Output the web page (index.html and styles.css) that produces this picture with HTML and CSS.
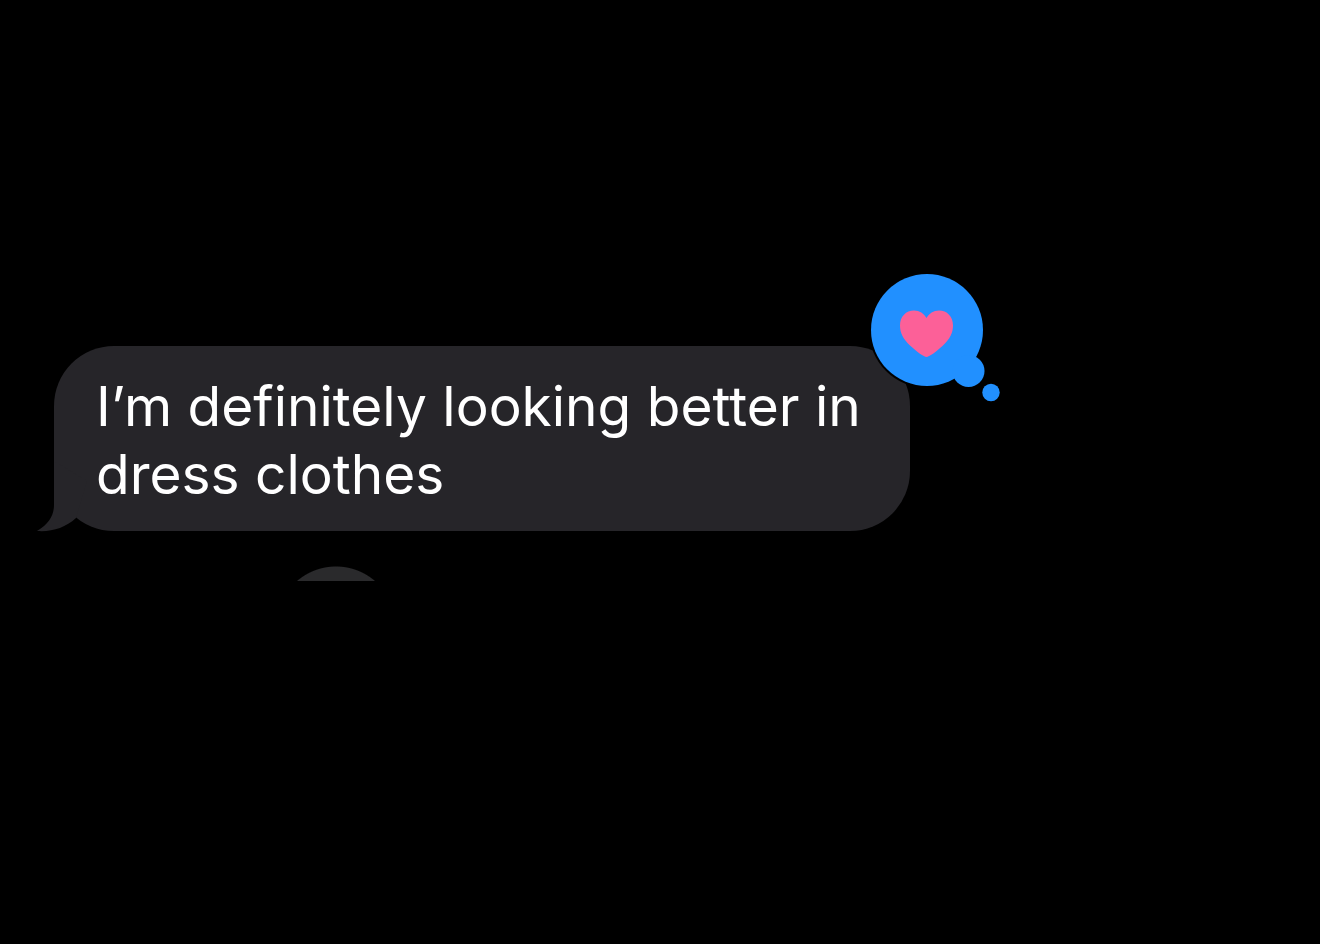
FILE: index.html
```html
<!DOCTYPE html>
<html lang="en">
<head>
  <meta charset="UTF-8" />
  <meta name="viewport" content="width=device-width, initial-scale=1.0" />
  <title>Messages</title>
  <link rel="stylesheet" href="styles.css">
</head>
<body>
  <main class="chat">
    <div class="bubble">
      <p class="text">I’m definitely looking better in dress clothes</p>

      <svg class="tail" width="60" height="70" viewBox="0 0 60 70" aria-hidden="true">
        <path d="M17 0V44C17 54 12 63 0 70C15 71 28 67 39 57L50 20Z" />
      </svg>

      <svg class="reaction" width="134" height="134" viewBox="0 0 134 134" role="img" aria-label="Loved">
        <circle class="ring" cx="59" cy="59" r="58" />
        <g class="cloud">
          <circle cx="59" cy="59" r="56" />
          <circle cx="100.500" cy="100" r="16" />
          <circle cx="123" cy="121.500" r="8.700" />
        </g>
        <path class="heart" d="M58.500 86C56 86 49 81 42 74.500C35 68 32 61.500 32 54.500C32 45.500 38 39.500 46 39.500C51.500 39.500 56 42.500 58.500 47C61 42.500 65.500 39.500 71 39.500C79 39.500 85 45.500 85 54.500C85 61.500 82 68 75 74.500C68 81 61 86 58.500 86Z" />
      </svg>
    </div>

    <div class="next"></div>
  </main>
</body>
</html>
```

FILE: styles.css
```css
body {
  margin: 0;
  background: #000;
  color: #fff;
  font-family: Inter, "Liberation Sans", sans-serif;
}
.chat {
  padding: 346px 54px 40px;
}
.bubble {
  position: relative;
  box-sizing: border-box;
  width: fit-content;
  max-width: 856px;
  padding: 26px 42px 23px;
  border-radius: 60px;
  background: #262529;
}
.text {
  margin: 0;
  font-size: 55px;
  line-height: 68px;
}
.tail {
  position: absolute;
  left: -17px;
  bottom: 0;
  overflow: visible;
  fill: #262529;
}
.reaction {
  position: absolute;
  top: -75px;
  right: -92px;
}
.ring {
  fill: #000;
}
.cloud {
  fill: #2190ff;
}
.heart {
  fill: #fc6098;
}
/* top edge of the next message */
.next {
  width: 120px;
  height: 15px;
  margin: 35px 0 0 222px;
  background: radial-gradient(circle at 60px 60px, #2a2a2c 59px, transparent 60px);
}
```
